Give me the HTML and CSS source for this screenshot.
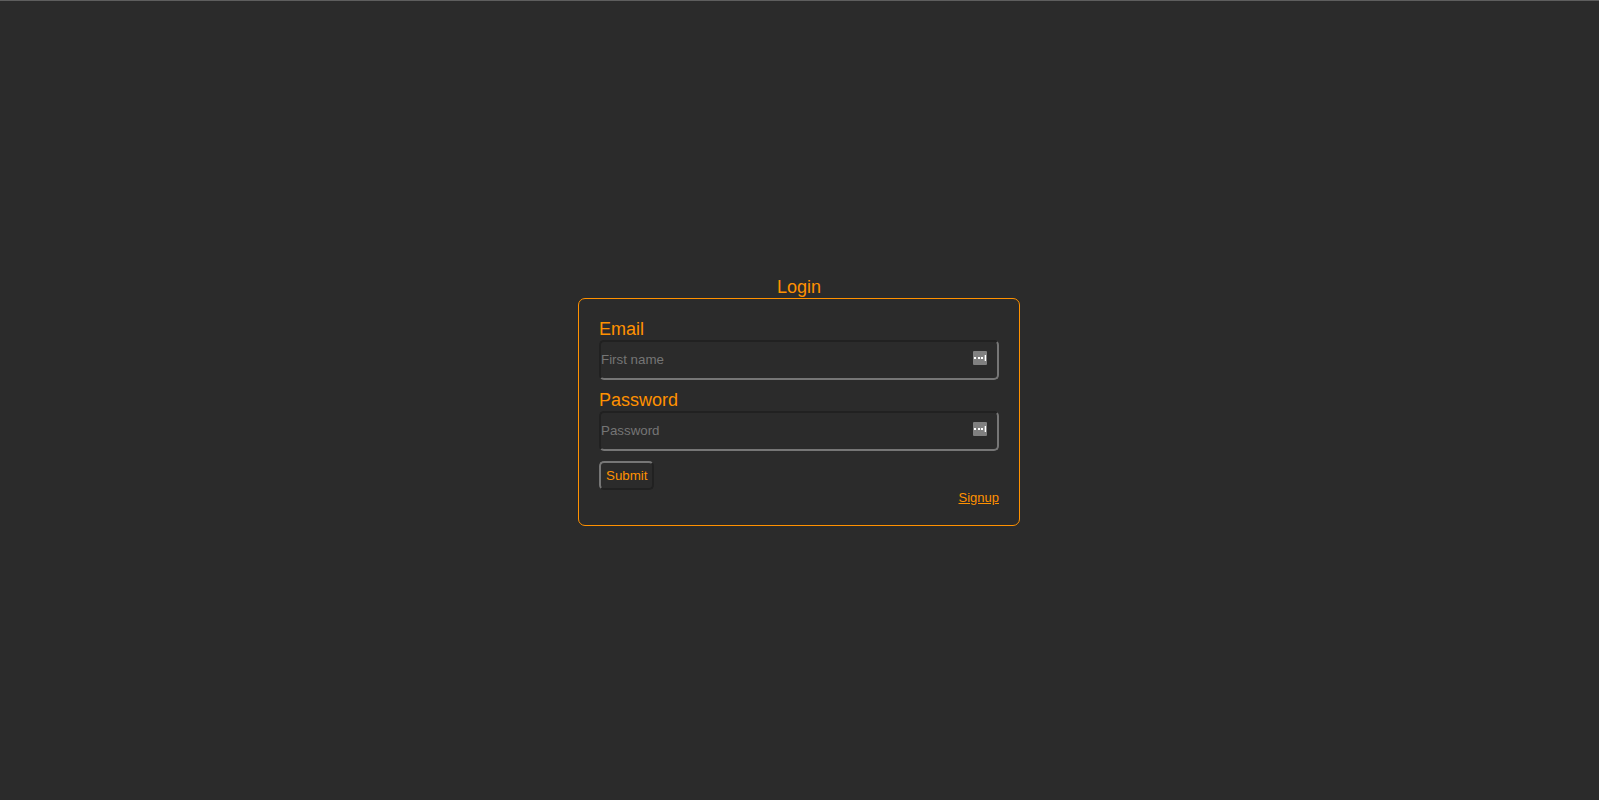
FILE: index.html
```
<!DOCTYPE html>
<html lang="en">
<head>
  <meta charset="utf-8">
  <meta name="viewport" content="width=device-width, initial-scale=1">
  <title>Login</title>
  <link rel="stylesheet" href="styles.css">
</head>
<body>
  <main class="page">
    <section class="login">
      <h1 class="title">Login</h1>
      <form class="card">
        <div class="field">
          <label class="label" for="email">Email</label>
          <div class="control">
            <input class="input" id="email" type="email" placeholder="First name">
            <svg class="fill-icon" viewBox="0 0 14 14" aria-hidden="true">
              <rect width="14" height="14" rx="1" fill="#808080"/>
              <path d="M1 6h2v2H1zM5 6h2v2H5zM8 6h2v2H8zM12 4h1v6h-1z" fill="#fff"/>
              <path d="M11 4h1v6h-1z" fill="#fff" opacity="0.3"/>
            </svg>
          </div>
        </div>
        <div class="field">
          <label class="label" for="password">Password</label>
          <div class="control">
            <input class="input" id="password" type="password" placeholder="Password">
            <svg class="fill-icon" viewBox="0 0 14 14" aria-hidden="true">
              <rect width="14" height="14" rx="1" fill="#808080"/>
              <path d="M1 6h2v2H1zM5 6h2v2H5zM8 6h2v2H8zM12 4h1v6h-1z" fill="#fff"/>
              <path d="M11 4h1v6h-1z" fill="#fff" opacity="0.3"/>
            </svg>
          </div>
        </div>
        <button class="submit" type="submit">Submit</button>
        <a class="signup" href="#">Signup</a>
      </form>
    </section>
  </main>
</body>
</html>
```
FILE: styles.css
```
* {
  box-sizing: border-box;
}

body {
  margin: 0;
  background: #2b2b2b;
  color: #ff9100;
  font-family: "Liberation Sans", Arial, sans-serif;
  font-size: 18px;
  line-height: 20px;
}

.page {
  display: flex;
  align-items: center;
  justify-content: center;
  min-height: 100vh;
  padding: 1px 1px 0 0;
  border-top: 1px solid #5e5e5e;
}

.login {
  width: 442px;
  max-width: 100%;
}

.title {
  margin: 0 0 1px;
  font-size: 18px;
  font-weight: 400;
  text-align: center;
}

.card {
  display: flex;
  flex-direction: column;
  padding: 20px;
  border: 1px solid #ff9100;
  border-radius: 7px;
}

.field {
  margin-bottom: 10px;
}

.label {
  display: block;
  margin-bottom: 1px;
}

.control {
  position: relative;
}

.input {
  display: block;
  width: 100%;
  height: 40px;
  padding: 0;
  border: 2px solid;
  border-color: #212121 #767676 #767676 #212121;
  border-radius: 5px;
  background: transparent;
  color: #ff9100;
  font-family: inherit;
}

.input::placeholder {
  color: #757575;
}

.fill-icon {
  position: absolute;
  top: 11px;
  right: 12px;
  width: 14px;
  height: 14px;
}

.submit {
  align-self: flex-start;
  padding: 5px;
  border: 2px solid;
  border-color: #767676 #212121 #212121 #767676;
  border-radius: 5px;
  background: transparent;
  color: #ff9100;
  font-family: inherit;
  line-height: 15px;
}

.signup {
  align-self: flex-end;
  color: #ff9100;
  font-size: 13px;
  line-height: 15px;
}
```
